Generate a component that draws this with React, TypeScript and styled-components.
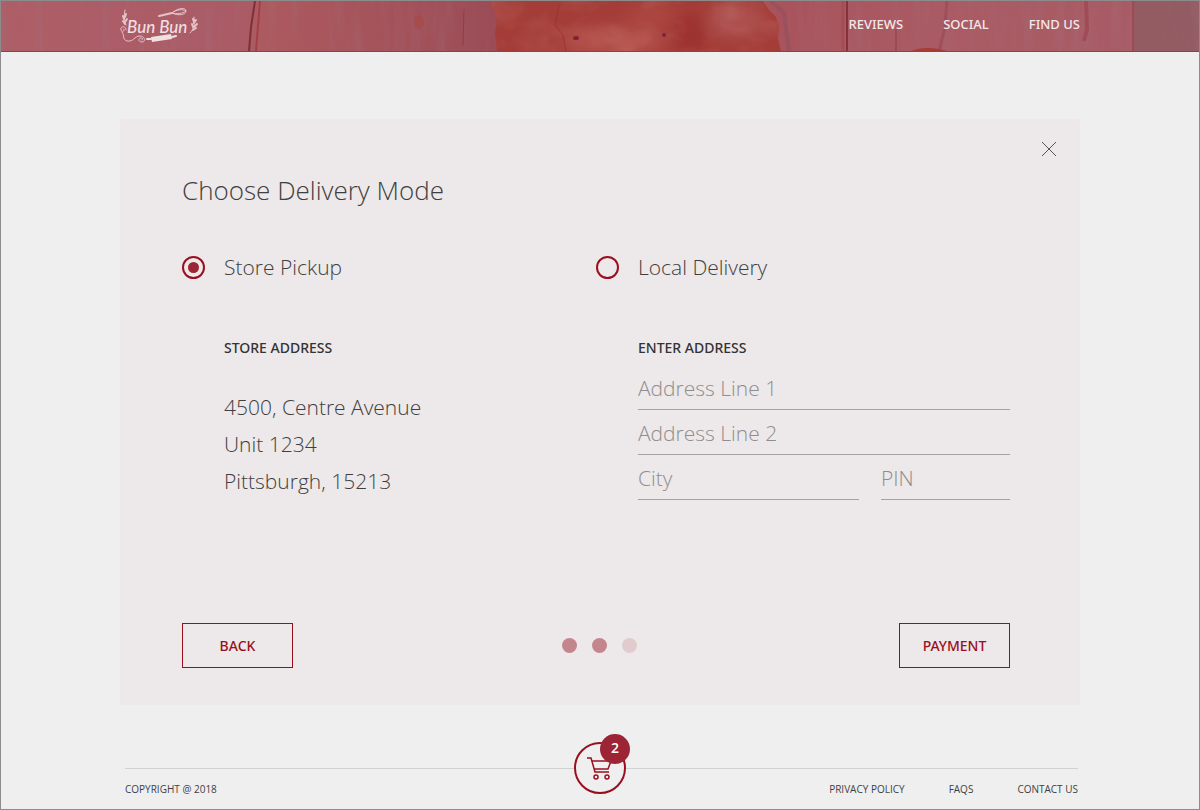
import React, { useState } from "react";
import styled, { createGlobalStyle } from "styled-components";

const sans = `"Open Sans", "Noto Sans", sans-serif`;
const medium = `"Noto Sans", "Open Sans", sans-serif`;
const crimson = "#9a0f20";
const ink = "#3f3f3f";

const GlobalStyle = createGlobalStyle`
  *, *::before, *::after { box-sizing: border-box; }
  body { margin: 0; background: #efefef; font-family: ${sans}; color: ${ink}; }
  button, input { font-family: inherit; }
`;

const Page = styled.div`
  display: flex;
  flex-direction: column;
  min-height: 100vh;
  border: 1px solid #8c8c8c;
  background: #efefef;
`;

const Header = styled.header`
  position: relative;
  height: 51px;
  background: #aa5b65;
  border-bottom: 1px solid #86454c;
`;

const Planks = styled.svg`
  position: absolute;
  inset: 0;
  width: 100%;
  height: 100%;
`;

const HeaderInner = styled.div`
  position: relative;
  display: flex;
  align-items: center;
  justify-content: space-between;
  max-width: 960px;
  height: 100%;
  margin: 0 auto;
`;

const Brand = styled.a`
  display: block;
  height: 36px;
`;

const Nav = styled.nav`
  display: flex;
  gap: 40px;
  padding-bottom: 4px;
`;

const NavLink = styled.a`
  color: #f3e9ea;
  font-family: ${medium};
  font-size: 13px;
  line-height: 18px;
  font-weight: 500;
  text-decoration: none;
`;

const Main = styled.main`
  flex: 1;
  width: 100%;
  max-width: 960px;
  margin: 0 auto;
  padding-top: 67px;
`;

const Card = styled.section`
  display: flex;
  flex-direction: column;
  min-height: 586px;
  padding: 20px 70px 37px 62px;
  background: #ede8e9;
`;

const CloseButton = styled.button`
  align-self: flex-end;
  display: flex;
  width: 20px;
  height: 20px;
  margin-right: -49px;
  padding: 3px;
  border: 0;
  background: none;
  cursor: pointer;
`;

const Title = styled.h1`
  margin: 13px 0 0;
  font-size: 26px;
  line-height: 36px;
  font-weight: 300;
`;

const Options = styled.div`
  display: grid;
  grid-template-columns: 1fr 1fr;
  margin-top: 43px;
`;

const Option = styled.div`
  display: flex;
  flex-direction: column;
`;

const OptionLabel = styled.label`
  display: flex;
  align-items: center;
  gap: 19px;
  font-size: 21px;
  line-height: 32px;
  font-weight: 300;
  cursor: pointer;
`;

const Radio = styled.input`
  appearance: none;
  display: grid;
  place-items: center;
  width: 23px;
  height: 23px;
  margin: 0;
  border: 2px solid ${crimson};
  border-radius: 50%;

  &:checked::before {
    content: "";
    width: 11px;
    height: 11px;
    border-radius: 50%;
    background: #9c2434;
  }
`;

const OptionBody = styled.div`
  padding: 55px 0 0 42px;
`;

const Caption = styled.h2`
  margin: 0;
  font-family: ${medium};
  font-size: 14px;
  line-height: 20px;
  font-weight: 500;
  color: #333;
`;

const Address = styled.address`
  margin-top: 31px;
  font-size: 21px;
  line-height: 37px;
  font-style: normal;
  font-weight: 300;
`;

const Fields = styled.div`
  display: grid;
  grid-template-columns: 221fr 129fr;
  column-gap: 22px;
  row-gap: 7px;
  margin-top: 14px;
`;

const Field = styled.input<{ $wide?: boolean }>`
  grid-column: ${(p) => (p.$wide ? "1 / -1" : "auto")};
  width: 100%;
  min-width: 0;
  height: 38px;
  padding: 0 0 6px;
  border: 0;
  border-bottom: 1px solid #a5a2a3;
  border-radius: 0;
  background: none;
  font-size: 21px;
  font-weight: 300;
  color: ${ink};
  outline-offset: 2px;

  &::placeholder { color: #8f8d8e; opacity: 1; }
`;

const Actions = styled.div`
  display: grid;
  grid-template-columns: 1fr auto 1fr;
  align-items: center;
  margin-top: auto;
`;

const ActionButton = styled.button<{ $end?: boolean }>`
  justify-self: ${(p) => (p.$end ? "end" : "start")};
  width: 111px;
  height: 45px;
  border: 1px solid ${crimson};
  background: none;
  color: ${crimson};
  font-family: ${medium};
  font-size: 14px;
  font-weight: 500;
  cursor: pointer;
`;

const Steps = styled.ol`
  display: flex;
  gap: 15px;
  margin: 0;
  padding: 0 0 0 7px;
  list-style: none;
`;

const Step = styled.li<{ $done?: boolean }>`
  width: 15px;
  height: 15px;
  border-radius: 50%;
  background: ${(p) => (p.$done ? "#c4868d" : "#e1cbce")};
`;

const Footer = styled.footer`
  width: 100%;
  max-width: 960px;
  margin: 0 auto;
  padding: 24px 2px 13px 5px;
`;

const Divider = styled.div`
  display: grid;
  grid-template-columns: 449fr 52px 452fr;
  align-items: center;
`;

const Rule = styled.span`
  height: 1px;
  margin-top: 8px;
  background: #d2d2d2;
`;

const CartButton = styled.button`
  position: relative;
  display: grid;
  place-items: center;
  width: 52px;
  height: 52px;
  margin-top: 8px;
  padding: 0;
  border: 2px solid ${crimson};
  border-radius: 50%;
  background: #efefef;
  cursor: pointer;
`;

const Badge = styled.span`
  position: absolute;
  top: -10px;
  right: -6px;
  width: 30px;
  height: 30px;
  border-radius: 50%;
  background: #9c2434;
  color: #fff;
  font-size: 14px;
  line-height: 28px;
  font-weight: 600;
  text-align: center;
`;

const FooterRow = styled.div`
  display: flex;
  justify-content: space-between;
  margin-top: -12px;
  font-size: 10px;
  line-height: 14px;
  font-weight: 500;
`;

const FooterLinks = styled.nav`
  display: flex;
  gap: 44px;
`;

const FooterLink = styled.a`
  color: inherit;
  text-decoration: none;
`;

function PaintedWood() {
  return (
    <Planks viewBox="0 0 1198 50" preserveAspectRatio="none" aria-hidden="true">
      <defs>
        <filter id="grain" x="0" y="0" width="100%" height="100%">
          <feTurbulence type="fractalNoise" baseFrequency="0.09 0.012" numOctaves="3" seed="4" />
          <feColorMatrix values="0 0 0 0 0.35  0 0 0 0 0.22  0 0 0 0 0.28  1.6 0 0 0 -0.72" />
        </filter>
        <filter id="mottle" x="0" y="0" width="100%" height="100%">
          <feTurbulence type="fractalNoise" baseFrequency="0.025 0.04" numOctaves="3" seed="9" />
          <feColorMatrix values="0 0 0 0 0.76  0 0 0 0 0.38  0 0 0 0 0.36  2 0 0 0 -0.85" />
          <feComposite in2="SourceGraphic" operator="in" />
        </filter>
        <filter id="soft" x="-20%" y="-20%" width="140%" height="140%">
          <feGaussianBlur stdDeviation="7" />
        </filter>
        <linearGradient id="wood">
          <stop offset="0" stopColor="#ad5e67" />
          <stop offset="0.2" stopColor="#aa5b65" />
          <stop offset="0.22" stopColor="#ac5a5f" />
          <stop offset="0.33" stopColor="#a4525a" />
          <stop offset="0.41" stopColor="#9b4c56" />
          <stop offset="0.65" stopColor="#a9535c" />
          <stop offset="0.8" stopColor="#aa5b64" />
          <stop offset="1" stopColor="#a85b65" />
        </linearGradient>
      </defs>
      <rect width="1198" height="50" fill="url(#wood)" />
      <rect x="1133" width="65" height="50" fill="#935b62" />
      <rect width="1198" height="50" filter="url(#grain)" opacity="0.25" />
      <path d="M254 0 L250 26 L248 50" stroke="#7d3038" strokeWidth="2" fill="none" />
      <path d="M259 0 L255 50" stroke="#a34046" strokeWidth="2" fill="none" />
      <path d="M463 8 L462 44" stroke="#85414d" strokeWidth="1" fill="none" />
      <ellipse cx="418" cy="21" rx="5" ry="7" fill="#a94843" opacity="0.6" />
      <path
        d="M490 0 H762 L768 9 L775 16 L778 25 L777 38 L780 50 H496 L494 32 L496 20 Z"
        fill="#a43d38"
      />
      <g filter="url(#soft)">
        <ellipse cx="612" cy="40" rx="52" ry="14" fill="#b3514c" />
        <ellipse cx="736" cy="20" rx="30" ry="17" fill="#ac4f4d" />
        <ellipse cx="650" cy="14" rx="24" ry="10" fill="#ac4741" />
        <ellipse cx="690" cy="34" rx="14" ry="22" fill="#9d302f" />
      </g>
      <path
        d="M490 0 H762 L768 9 L775 16 L778 25 L777 38 L780 50 H496 L494 32 L496 20 Z"
        fill="#fff"
        filter="url(#mottle)"
        opacity="0.2"
      />
      <path d="M558 4 L554 24 L562 34 L565 50" stroke="#8f2f33" strokeWidth="1" fill="none" opacity="0.7" />
      <ellipse cx="575" cy="37" rx="3" ry="2" fill="#7c2536" />
      <ellipse cx="663" cy="34" rx="2" ry="2" fill="#7c2536" />
      <path d="M770 0 L783 12 L788 50" stroke="#8c4f5f" strokeWidth="4" fill="none" opacity="0.5" />
      <path d="M846 0 V50" stroke="#873139" strokeWidth="2" />
      <path d="M842 0 V50" stroke="#a14850" strokeWidth="3" opacity="0.6" />
      <path d="M946 0 L944 26 L938 50" stroke="#984651" strokeWidth="3" fill="none" opacity="0.6" />
      <path d="M895 28 V50" stroke="#94434d" strokeWidth="2" opacity="0.6" />
      <path d="M1085 0 L1086 28 L1083 40" stroke="#9c4550" strokeWidth="4" fill="none" opacity="0.7" />
      <path d="M1132 0 V50" stroke="#a04955" strokeWidth="2" />
      <path d="M910 50 Q925 44 946 50 Z" fill="#a63c34" />
    </Planks>
  );
}

function Logo() {
  return (
    <svg width="80" height="36" viewBox="0 0 80 36" fill="none" role="img" aria-label="Bun Bun">
      <text
        x="7"
        y="25"
        fill="#f1dfe1"
        fontFamily="Lato, sans-serif"
        fontSize="17"
        fontStyle="italic"
        fontWeight="500"
      >
        Bun Bun
      </text>
      <g stroke="#e4c4c8" strokeLinecap="round">
        <path d="M6 17 C4 12 4 8 5 2" />
        <path d="M5 16 L3 13 M5 14 L7 11 M4 11 L3 8 M5 9 L6 6" strokeWidth="2" />
        <path d="M6 22 C6 17 0 18 1 22 C2 25 5 23 4 21 M2 24 C5 28 2 31 7 33 C14 34 14 28 20 28 C25 28 26 34 22 34 C18 34 18 30 21 30 C23 30 23 32 22 32" />
        <path d="M70 25 C74 21 75 16 74 9" />
        <path d="M73 19 L72 16 M74 19 L77 16 M73 22 L76 20 M74 15 L76 12 M74 14 L73 11" strokeWidth="2" />
        <path d="M39 8 L52 5" strokeWidth="2" />
        <path d="M52 5 C57 0 66 -1 66 3 C66 7 58 8 52 5 C57 1 63 1 66 3 C62 6 57 6 52 5" />
      </g>
      <path d="M31 29 L51 26 L52 31 L32 34 Z" fill="#f1dfe1" />
      <path d="M27 31 L31 31 M52 29 L56 28" stroke="#f1dfe1" strokeWidth="2" strokeLinecap="round" />
    </svg>
  );
}

function CartIcon() {
  return (
    <svg width="26" height="26" viewBox="0 0 26 26" fill="none" stroke={crimson} strokeWidth="1.500" aria-hidden="true">
      <path d="M0 3 H4 L8 17 H22" />
      <path d="M5 6 H24 L21 14 H7" />
      <circle cx="9" cy="22" r="2" />
      <circle cx="20" cy="22" r="2" />
    </svg>
  );
}

export default function App() {
  const [mode, setMode] = useState("pickup");

  return (
    <>
      <GlobalStyle />
      <Page>
        <Header>
          <PaintedWood />
          <HeaderInner>
            <Brand href="#home"><Logo /></Brand>
            <Nav>
              <NavLink href="#reviews">REVIEWS</NavLink>
              <NavLink href="#social">SOCIAL</NavLink>
              <NavLink href="#find">FIND US</NavLink>
            </Nav>
          </HeaderInner>
        </Header>
        <Main>
          <Card>
            <CloseButton type="button" aria-label="Close">
              <svg width="14" height="14" viewBox="0 0 14 14" stroke="#555" aria-hidden="true">
                <path d="M0 0 L14 14 M14 0 L0 14" />
              </svg>
            </CloseButton>
            <Title>Choose Delivery Mode</Title>
            <Options>
              <Option>
                <OptionLabel>
                  <Radio type="radio" name="mode" checked={mode === "pickup"} onChange={() => setMode("pickup")} />
                  Store Pickup
                </OptionLabel>
                <OptionBody>
                  <Caption>STORE ADDRESS</Caption>
                  <Address>
                    4500, Centre Avenue
                    <br />
                    Unit 1234
                    <br />
                    Pittsburgh, 15213
                  </Address>
                </OptionBody>
              </Option>
              <Option>
                <OptionLabel>
                  <Radio type="radio" name="mode" checked={mode === "local"} onChange={() => setMode("local")} />
                  Local Delivery
                </OptionLabel>
                <OptionBody>
                  <Caption>ENTER ADDRESS</Caption>
                  <Fields>
                    <Field $wide aria-label="Address Line 1" placeholder="Address Line 1" />
                    <Field $wide aria-label="Address Line 2" placeholder="Address Line 2" />
                    <Field aria-label="City" placeholder="City" />
                    <Field aria-label="PIN" placeholder="PIN" />
                  </Fields>
                </OptionBody>
              </Option>
            </Options>
            <Actions>
              <ActionButton type="button">BACK</ActionButton>
              <Steps aria-label="Progress">
                <Step $done />
                <Step $done />
                <Step />
              </Steps>
              <ActionButton type="button" $end>PAYMENT</ActionButton>
            </Actions>
          </Card>
        </Main>
        <Footer>
          <Divider>
            <Rule />
            <CartButton type="button" aria-label="Cart, 2 items">
              <CartIcon />
              <Badge>2</Badge>
            </CartButton>
            <Rule />
          </Divider>
          <FooterRow>
            <span>COPYRIGHT @ 2018</span>
            <FooterLinks>
              <FooterLink href="#privacy">PRIVACY POLICY</FooterLink>
              <FooterLink href="#faqs">FAQS</FooterLink>
              <FooterLink href="#contact">CONTACT US</FooterLink>
            </FooterLinks>
          </FooterRow>
        </Footer>
      </Page>
    </>
  );
}
